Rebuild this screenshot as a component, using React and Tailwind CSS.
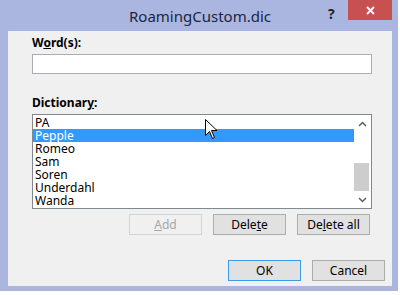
export default function App() {
  const words = ["PA", "Pepple", "Romeo", "Sam", "Soren", "Underdahl", "Wanda"];
  const selected = "Pepple";
  const btn = "h-[21px] flex items-center justify-center text-[12px] border";

  return (
    <div className="w-[400px] h-[295px] bg-white relative" style={{ fontFamily: '"Noto Sans", "Open Sans", sans-serif' }}>
      <div className="w-[398px] h-[291px] bg-[#aab6e0] flex flex-col">
        {/* title bar */}
        <div className="h-[31px] relative flex items-center justify-center shrink-0">
          <span className="text-[15px] text-[#1b2741] pl-[2px] pt-[1px]">RoamingCustom.dic</span>
          <span className="absolute left-[328px] top-[3px] text-[14px] font-bold text-[#222]">?</span>
          <div className="absolute left-[348px] top-0 w-[44px] h-[20px] bg-[#c75050] flex items-center justify-center">
            <svg width="9" height="9" viewBox="0 0 9 9">
              <path d="M1 1L8 8M8 1L1 8" stroke="white" strokeWidth="1.8" />
            </svg>
          </div>
        </div>

        {/* client area */}
        <div className="ml-[8px] mr-[6px] h-[255px] bg-[#f0f0f0] flex flex-col pl-[24px] text-[12px] text-black">
          <div className="mt-[4px] h-[16px] font-bold leading-[16px]">
            W<span className="underline">o</span>rd(s):
          </div>
          <div className="mt-[3px] w-[340px] h-[20px] bg-white border border-[#abadb3]"></div>

          <div className="mt-[21px] h-[16px] font-bold leading-[16px]">
            Dictionar<span className="underline">y</span>:
          </div>
          <div className="mt-[3px] w-[340px] h-[95px] bg-white border border-[#828790] flex">
            <div className="flex-1 flex flex-col pt-[1px]">
              {words.map((w) => (
                <div
                  key={w}
                  className={`h-[13px] leading-[13px] pl-[2px] ${w === selected ? "bg-[#3399ff] text-white" : ""}`}
                >
                  {w}
                </div>
              ))}
            </div>
            <div className="w-[17px] flex flex-col items-center">
              <div className="h-[17px] flex items-center justify-center">
                <svg width="9" height="6" viewBox="0 0 9 6">
                  <path d="M1 5L4.5 1.5L8 5" stroke="#606060" strokeWidth="1.5" fill="none" />
                </svg>
              </div>
              <div className="flex-1 w-full flex flex-col">
                <div className="h-[31px]"></div>
                <div className="h-[28px] w-[15px] bg-[#cdcdcd]"></div>
              </div>
              <div className="h-[17px] flex items-center justify-center">
                <svg width="9" height="6" viewBox="0 0 9 6">
                  <path d="M1 1L4.5 4.5L8 1" stroke="#606060" strokeWidth="1.5" fill="none" />
                </svg>
              </div>
            </div>
          </div>

          <div className="mt-[5px] flex pl-[97px] gap-[11px]">
            <div className={`${btn} w-[73px] bg-[#f0f0f0] border-[#d3d3d3] text-[#a6a6a6]`}>
              <span className="underline">A</span>dd
            </div>
            <div className={`${btn} w-[73px] bg-[#e1e1e1] border-[#adadad]`}>
              Dele<span className="underline">t</span>e
            </div>
            <div className={`${btn} w-[73px] bg-[#e1e1e1] border-[#adadad]`}>
              De<span className="underline">l</span>ete all
            </div>
          </div>

          <div className="mt-[25px] flex pl-[196px] gap-[11px]">
            <div className={`${btn} w-[73px] bg-[#e1e1e1] border-[#3c9be6]`}>OK</div>
            <div className={`${btn} w-[73px] bg-[#e1e1e1] border-[#adadad]`}>Cancel</div>
          </div>
        </div>
      </div>

      {/* mouse pointer */}
      <svg className="absolute left-[205px] top-[119px]" width="13" height="21" viewBox="0 0 13 21">
        <path d="M0.5 0.5L0.5 16.5L4.5 12.5L7.5 19.5L9.5 18.5L6.5 11.5L12 11.5Z" fill="white" stroke="black" strokeWidth="1" strokeLinejoin="miter" />
      </svg>
    </div>
  );
}
